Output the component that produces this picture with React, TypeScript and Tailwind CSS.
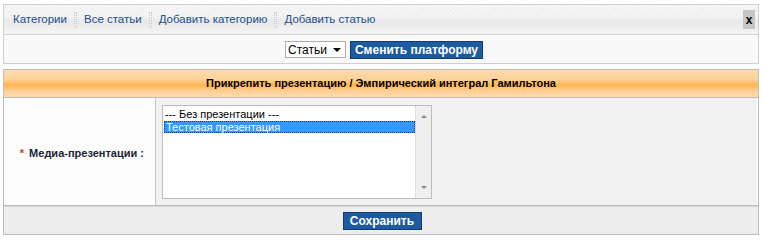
import React from "react";

const font = { fontFamily: '"Liberation Sans", Arial, sans-serif' };

function Sep() {
  return <div className="mx-[7px] h-[16px] w-[3px] border-l border-r border-dotted border-[#c9c9c9]" />;
}

export default function App() {
  return (
    <div className="w-[763px] h-[241px] bg-white pt-[4px] px-[3px]" style={font}>
      {/* top panel */}
      <div className="w-[756px] border border-[#cfcfcf]">
        <div className="relative flex h-[30px] items-center border-b border-[#d2d2d2] bg-[linear-gradient(to_bottom,#f7f7f7_0%,#f1f1f1_40%,#e9e9e9_55%,#f4f4f4_100%)] pl-[9px] text-[11.5px] text-[#1d4f8e]">
          <div className="absolute inset-x-0 top-0 h-[13px] bg-[repeating-linear-gradient(135deg,#f6f6f6_0px,#f6f6f6_2px,#ededed_2px,#ededed_3px)] opacity-70" />
          <div className="relative flex items-center pt-[1px]">
            <span>Категории</span>
            <Sep />
            <span>Все статьи</span>
            <Sep />
            <span>Добавить категорию</span>
            <Sep />
            <span>Добавить статью</span>
          </div>
          <div className="relative ml-auto mr-[3px] flex h-[19px] w-[12px] items-center justify-center bg-[#c6c6c6] text-[12px] font-bold leading-none text-black">
            x
          </div>
        </div>
        <div className="flex h-[28px] items-center justify-center bg-[#f9f9f9] pl-[6px] pt-[1px]">
          <div className="flex h-[17px] w-[61px] items-center border border-[#adadad] bg-white pl-[2px] text-[12px] text-black">
            <span>Статьи</span>
            <span className="ml-auto mr-[4px] h-0 w-0 border-x-[4px] border-t-[4px] border-x-transparent border-t-black" />
          </div>
          <div className="ml-[4px] flex h-[18px] w-[133px] items-center justify-center border border-[#0f3d73] bg-[#1e5aa0] text-[12px] font-bold text-white">
            Сменить платформу
          </div>
        </div>
      </div>

      {/* form box */}
      <div className="mt-[5px] w-[756px] border border-[#bdbdbd]">
        <div className="flex h-[28px] items-center justify-center border-b border-[#bdbdbd] bg-[linear-gradient(to_bottom,#fddcae_0%,#fed19a_35%,#ffb54f_55%,#fed29c_80%,#fdd9aa_100%)] text-[11px] font-bold text-black">
          Прикрепить презентацию / Эмпирический интеграл Гамильтона
        </div>
        <div className="flex h-[108px] border-b border-[#bdbdbd]">
          <div className="flex w-[152px] items-center justify-end border-r border-[#c4c4c4] bg-[#fdfdfd] pr-[11px] pt-[4px] text-[11px] font-bold text-[#1a2433]">
            <span className="mr-[5px] text-[#d04020]">*</span>
            Медиа-презентации :
          </div>
          <div className="flex-1 border-r border-white bg-[#f1f1f1] pl-[6px] pt-[7px]">
            <div className="flex h-[94px] w-[270px] border border-[#bcbcbc] bg-white">
              <div className="flex-1 pl-[1px] pt-[2px] text-[11px] leading-[13px]">
                <div className="h-[13px] pl-[1px] text-black">--- Без презентации ---</div>
                <div className="h-[12px] border border-dotted border-[#0a3a7a] bg-[#3399ff] pl-[1px] leading-[10px] text-white">
                  Тестовая презентация
                </div>
              </div>
              <div className="relative w-[16px] border-l border-dotted border-[#cfcfcf] bg-[#efefef]">
                <span className="absolute left-[5px] top-[9px] h-0 w-0 border-x-[3px] border-b-[3px] border-x-transparent border-b-[#8a8a8a]" />
                <span className="absolute bottom-[9px] left-[5px] h-0 w-0 border-x-[3px] border-t-[3px] border-x-transparent border-t-[#8a8a8a]" />
              </div>
            </div>
          </div>
        </div>
        <div className="flex h-[28px] items-center justify-center border-t border-[#d6d6d6] bg-[#ededed] pl-[2px]">
          <div className="flex h-[18px] w-[79px] items-center justify-center border border-[#0f3d73] bg-[#1e5aa0] text-[12px] font-bold text-white">
            Сохранить
          </div>
        </div>
      </div>
    </div>
  );
}
